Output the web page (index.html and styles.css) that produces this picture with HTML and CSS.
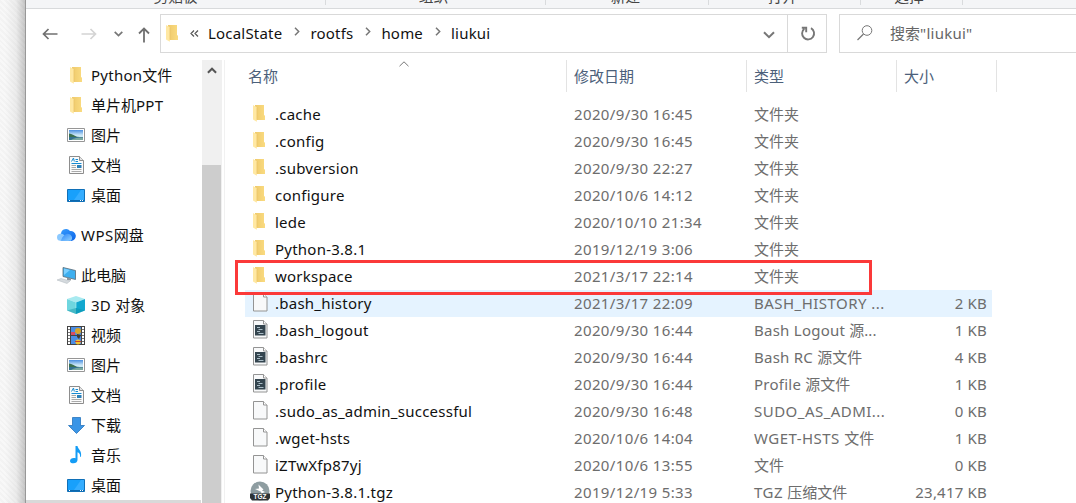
FILE: index.html
```
<!DOCTYPE html>
<html lang="zh-CN">
<head>
<meta charset="utf-8">
<title>liukui</title>
<link rel="stylesheet" href="styles.css">
</head>
<body>
<svg class="defs" aria-hidden="true">
  <defs>
    <linearGradient id="gf" x1="0" x2="1"><stop offset="0" stop-color="#efca6c"/><stop offset="1" stop-color="#fadb80"/></linearGradient>
    <linearGradient id="gsky" x1="0" y1="0" x2="0" y2="1"><stop offset="0" stop-color="#4a8fe0"/><stop offset=".5" stop-color="#c9e6f7"/><stop offset="1" stop-color="#d5edf5"/></linearGradient>
    <linearGradient id="gw" x1="0" y1="0" x2="1" y2="1"><stop offset="0" stop-color="#3aa0ff"/><stop offset="1" stop-color="#0a62e8"/></linearGradient>
    <linearGradient id="gw2" x1="0" y1="0" x2="1" y2="1"><stop offset="0" stop-color="#2b86f8"/><stop offset="1" stop-color="#8fd0ff"/></linearGradient>
    <symbol id="folder" viewBox="0 0 12 17"><path d="M2 0h9v10.200l1 .4V15H2z" fill="url(#gf)"/><path d="M0 0l3.900 2.200V16.800L0 14.600z" fill="#ffe8a3"/><path d="M3.900 2.400v12.300" stroke="#e6bf62" stroke-width=".5"/></symbol>
    <symbol id="picture" viewBox="0 0 18 14"><path d="M.5.5h17v13H.5z" fill="#fff" stroke="#969696"/><path d="M2 2h14v10H2z" fill="url(#gsky)"/><path d="M2 5.500c3 .3 5 2 8 3.200L13 9H2z" fill="#3c704f"/><path d="M2 9h14v3H2z" fill="#33718f"/><path d="M4 12c3-2 7-2.500 12-2.500V12z" fill="#79a8a0"/></symbol>
    <symbol id="doc" viewBox="0 0 15 18"><path d="M.5.5h10l4 4v13H.500z" fill="#fbfbfb" stroke="#8d8d8d"/><path d="M10.500.500v4h4" fill="#e4e4e4" stroke="#8d8d8d"/><path d="M2.500 5.500l2-3.500.8 3.500M6.500 3.500H9M6.500 5.500H9M2.500 7.500h10" fill="none" stroke="#168bd2"/><path d="M2.500 9.500H7M2.500 11.500H7M2.500 13.500h10M2.500 15.500h10" stroke="#aaa"/><path d="M8 9h4.500v3H8z" fill="#2b7fb8"/></symbol>
    <symbol id="desktop" viewBox="0 0 18 13"><path d="M.5.5h17v12H.5z" fill="#18a0fb" stroke="#1070b8"/><path d="M7 11L14 1h3v10z" fill="#35adff"/><path d="M1 11.500h16" stroke="#0d68ad"/><path d="M2 11.500h1M13 11.500h1M15 11.500h1" stroke="#fff"/></symbol>
    <symbol id="cloud" viewBox="0 0 19 14"><path d="M5 13a4 4 0 0 1-1-7.500A5 5 0 0 1 13 3a5 5 0 0 1 1.500 10z" fill="url(#gw)"/><path d="M3.500 12.700a3.500 3.500 0 0 1 0-7c3-.2 5 1.800 8.500 7z" fill="#8bc9ff"/><path d="M4 12.700c2-6 6-8 9-6.200 2 1.200 3 4 1 6.200z" fill="url(#gw2)"/></symbol>
    <symbol id="pc" viewBox="0 0 19 17"><path d="M6 .5l12.500 3v9L6 9.500z" fill="#3eafef" stroke="#5b6a75" stroke-width=".8"/><path d="M7 1.500l6 1.500-6 5z" fill="#7bcfff"/><path d="M10 10.500l4 1v2l-4-.5z" fill="#8a949c"/><path d="M0 13l4-1.500 9 2.500-3 2.500z" fill="#d5dade" stroke="#aeb6bc" stroke-width=".5"/></symbol>
    <symbol id="cube" viewBox="0 0 18 18"><path d="M9 0l9 3-9 3.500L0 3z" fill="#a8eaf0"/><path d="M0 3l9 3.500V18l-9-3.500z" fill="#6fd6df"/><path d="M18 3L9 6.500V18l9-3.500z" fill="#12a8cf"/><path d="M9 12l9 2.500L9 18l-9-3.500z" fill="#078ba0" opacity=".4"/><path d="M9 6.500V12" stroke="#b4f1f5" stroke-width=".6"/></symbol>
    <symbol id="film" viewBox="0 0 18 19"><path d="M0 0h18v19H0z" fill="#444"/><path d="M4 1h10v8H4zM4 10h10v8H4z" fill="#4b8de4"/><path d="M1 1h2v17H1zM15 1h2v17h-2z" fill="#777"/><path d="M2 1v17M16 1v17" stroke="#fff" stroke-width="2" stroke-dasharray="2 1"/><circle cx="11" cy="5" r="3" fill="#d8a52c"/><path d="M4 6h4v3H4z" fill="#da4c62"/><path d="M10 8l4 1-2 4-2-2z" fill="#473b2b"/><circle cx="11" cy="16" r="2.500" fill="#f1c431"/><path d="M8 15h6v1H8z" fill="#c8432c"/></symbol>
    <symbol id="down" viewBox="0 0 17 17"><path d="M4.500.500h8v8h4l-8 8-8-8h4z" fill="#3a95e6" stroke="#2775bd" stroke-width=".8"/></symbol>
    <symbol id="music" viewBox="0 0 12 18"><path d="M5.500 0h2c.3 3 4.200 4.500 3.600 9.500-.2 1-.7 1.500-1.100 1.500.6-3-1-4.200-2.500-4.700V14c0 2-1.800 3.300-4 3.300S0 16.500 0 15c0-2 2.500-3.500 5.500-2.700z" fill="#149cf5"/></symbol>
    <symbol id="file" viewBox="0 0 15 19"><path d="M.5.5h10l3.500 3.500v14H.5z" fill="#f8f9fa" stroke="#949494"/><path d="M10.500.500V4H14" fill="#fff" stroke="#949494"/></symbol>
    <symbol id="script" viewBox="0 0 15 19"><path d="M.5.5h10l3.500 3.500v14H.5z" fill="#f8f9fa" stroke="#949494"/><path d="M10.500.500V4H14" fill="#fff" stroke="#949494"/><path d="M2 5h10.500v10.500H2z" fill="#34454f"/><path d="M4 7.500h3M5.500 9.500h4M4 11.500h3M5.500 13.500h5" stroke="#a9bcc6"/></symbol>
    <symbol id="tgz" viewBox="0 0 20 20"><circle cx="10" cy="10" r="9.500" fill="#8e9da1"/><path d="M8.500 3.500l5 5-1.500 1 3 1.500-4.500 2L11.500 11 5 8l4-.5z" fill="#fff"/><path d="M0 12.500h20V17l-2 2.500H2L0 17z" fill="#2d3336"/><text x="10" y="18.300" text-anchor="middle" class="tgz-label">TGZ</text></symbol>
    <symbol id="crumb" viewBox="0 0 6 9"><path d="M1 .7l3.700 3.800L1 8.300" fill="none" stroke="#777" stroke-width="1.500"/></symbol>
  </defs>
</svg>

<div class="screen">
  <div class="backdrop"></div>
  <main class="window">
    <div class="ribbon">
      <div class="group clip">剪贴板</div><div class="group org">组织</div><div class="group new">新建</div><div class="group open">打开</div><div class="group sel">选择</div>
    </div>
    <nav class="navbar">
      <svg class="arrow-left" viewBox="0 0 16 12"><path d="M15.500 6H1.500M6.500 1L1.500 6l5 5" fill="none" stroke="#707070" stroke-width="1.700"/></svg>
      <svg class="arrow-right" viewBox="0 0 16 12"><path d="M.500 6h14M9.500 1l5 5-5 5" fill="none" stroke="#d4d4d4" stroke-width="1.700"/></svg>
      <svg class="recent" viewBox="0 0 9 6"><path d="M.7.8l3.800 3.800L8.300.8" fill="none" stroke="#777" stroke-width="1.700"/></svg>
      <svg class="arrow-up" viewBox="0 0 12 16"><path d="M6 15.500V1.500M1 6.500l5-5 5 5" fill="none" stroke="#707070" stroke-width="1.800"/></svg>
      <div class="address">
        <svg class="folder"><use href="#folder"/></svg>
        <svg class="more" viewBox="0 0 9 7"><path d="M4 .5L1 3.500l3 3M8 .5L5 3.500l3 3" fill="none" stroke="#555" stroke-width="1.200"/></svg>
        <span class="crumbs"><span>LocalState</span><svg><use href="#crumb"/></svg><span>rootfs</span><svg><use href="#crumb"/></svg><span>home</span><svg><use href="#crumb"/></svg><span>liukui</span></span>
        <svg class="drop" viewBox="0 0 12 8"><path d="M1 1.200l5 5 5-5" fill="none" stroke="#777" stroke-width="2"/></svg>
      </div>
      <div class="refresh"><svg viewBox="0 0 16 16"><path d="M11 2.200A6 6 0 1 1 4.300 2.800M1.800 1.800h4.400v4.400" fill="none" stroke="#777" stroke-width="1.900"/></svg></div>
      <div class="search"><svg viewBox="0 0 16 16"><circle cx="10" cy="5.500" r="4.800" fill="none" stroke="#777"/><path d="M6.500 9L.5 15" stroke="#777" stroke-width="1.200"/></svg><span>搜索<i>"liukui"</i></span></div>
    </nav>
    <div class="body">
      <aside class="tree">
        <div class="node"><b><svg class="folder"><use href="#folder"/></svg></b><i>Python</i>文件</div>
        <div class="node"><b><svg class="folder"><use href="#folder"/></svg></b>单片机<i>PPT</i></div>
        <div class="node"><b><svg class="picture"><use href="#picture"/></svg></b>图片</div>
        <div class="node"><b><svg class="doc"><use href="#doc"/></svg></b>文档</div>
        <div class="node"><b><svg class="desktop"><use href="#desktop"/></svg></b>桌面</div>
        <div class="node root"><b><svg class="cloud"><use href="#cloud"/></svg></b><i class="caps">WPS</i>网盘</div>
        <div class="node root"><b><svg class="pc"><use href="#pc"/></svg></b>此电脑</div>
        <div class="node"><b><svg class="cube"><use href="#cube"/></svg></b><i>3D </i>对象</div>
        <div class="node"><b><svg class="film"><use href="#film"/></svg></b>视频</div>
        <div class="node"><b><svg class="picture"><use href="#picture"/></svg></b>图片</div>
        <div class="node"><b><svg class="doc"><use href="#doc"/></svg></b>文档</div>
        <div class="node"><b><svg class="down"><use href="#down"/></svg></b>下载</div>
        <div class="node"><b><svg class="music"><use href="#music"/></svg></b>音乐</div>
        <div class="node"><b><svg class="desktop"><use href="#desktop"/></svg></b>桌面</div>
        <div class="tree-end"></div>
      </aside>
      <div class="scrollbar"><svg viewBox="0 0 10 7"><path d="M.9 5.800L5 1.700l4.100 4.100" fill="none" stroke="#555" stroke-width="2"/></svg><div class="thumb"></div></div>
      <section class="files">
        <header class="columns"><span>名称<svg class="sort" viewBox="0 0 10 6"><path d="M.5 5.200L5 .8l4.500 4.400" fill="none" stroke="#777"/></svg></span><span>修改日期</span><span>类型</span><span>大小</span></header>
        <div class="rows">
          <div class="row"><svg class="folder"><use href="#folder"/></svg><span class="name">.cache</span><span class="date">2020/9/30 16:45</span><span class="type">文件夹</span><span class="size"></span></div>
          <div class="row"><svg class="folder"><use href="#folder"/></svg><span class="name">.config</span><span class="date">2020/9/30 16:45</span><span class="type">文件夹</span><span class="size"></span></div>
          <div class="row"><svg class="folder"><use href="#folder"/></svg><span class="name">.subversion</span><span class="date">2020/9/30 22:27</span><span class="type">文件夹</span><span class="size"></span></div>
          <div class="row"><svg class="folder"><use href="#folder"/></svg><span class="name">configure</span><span class="date">2020/10/6 14:12</span><span class="type">文件夹</span><span class="size"></span></div>
          <div class="row"><svg class="folder"><use href="#folder"/></svg><span class="name">lede</span><span class="date">2020/10/10 21:34</span><span class="type">文件夹</span><span class="size"></span></div>
          <div class="row"><svg class="folder"><use href="#folder"/></svg><span class="name">Python-3.8.1</span><span class="date">2019/12/19 3:06</span><span class="type">文件夹</span><span class="size"></span></div>
          <div class="row marked"><svg class="folder"><use href="#folder"/></svg><span class="name">workspace</span><span class="date">2021/3/17 22:14</span><span class="type">文件夹</span><span class="size"></span></div>
          <div class="row hover"><svg class="file"><use href="#file"/></svg><span class="name">.bash_history</span><span class="date">2021/3/17 22:09</span><span class="type"><i class="caps">BASH_HISTORY ...</i></span><span class="size">2 KB</span></div>
          <div class="row"><svg class="file"><use href="#script"/></svg><span class="name">.bash_logout</span><span class="date">2020/9/30 16:44</span><span class="type"><i>Bash Logout </i>源...</span><span class="size">1 KB</span></div>
          <div class="row"><svg class="file"><use href="#script"/></svg><span class="name">.bashrc</span><span class="date">2020/9/30 16:44</span><span class="type"><i>Bash RC </i>源文件</span><span class="size">4 KB</span></div>
          <div class="row"><svg class="file"><use href="#script"/></svg><span class="name">.profile</span><span class="date">2020/9/30 16:44</span><span class="type"><i>Profile </i>源文件</span><span class="size">1 KB</span></div>
          <div class="row"><svg class="file"><use href="#file"/></svg><span class="name">.sudo_as_admin_successful</span><span class="date">2020/9/30 16:48</span><span class="type"><i class="caps">SUDO_AS_ADMI...</i></span><span class="size">0 KB</span></div>
          <div class="row"><svg class="file"><use href="#file"/></svg><span class="name">.wget-hsts</span><span class="date">2020/10/6 14:04</span><span class="type"><i class="caps">WGET-HSTS </i>文件</span><span class="size">1 KB</span></div>
          <div class="row"><svg class="file"><use href="#file"/></svg><span class="name">iZTwXfp87yj</span><span class="date">2020/10/6 13:55</span><span class="type">文件</span><span class="size">0 KB</span></div>
          <div class="row"><svg class="tgz"><use href="#tgz"/></svg><span class="name">Python-3.8.1.tgz</span><span class="date">2019/12/19 5:33</span><span class="type"><i class="caps">TGZ </i>压缩文件</span><span class="size">23,417 KB</span></div>
        </div>
      </section>
    </div>
  </main>
</div>
</body>
</html>
```

FILE: styles.css
```
* { box-sizing: border-box; }
body {
  margin: 0;
  overflow: hidden;
  font: 15px/20px "Noto Sans", "Noto Sans CJK SC", sans-serif;
  color: #111;
  background: #fff;
}
svg { display: block; flex: none; }
i { font-style: normal; white-space: pre; letter-spacing: .25px; }
.caps { letter-spacing: .47px; }
.defs { position: absolute; width: 0; height: 0; }
.screen { display: flex; width: 1076px; height: 503px; overflow: hidden; }
.backdrop {
  width: 25px;
  flex: none;
  background:
    linear-gradient(90deg, rgba(0,0,0,0) 20%, rgba(0,0,0,.05) 65%, rgba(0,0,0,.2)),
    repeating-linear-gradient(45deg, #f8f8f8 0 2px, #f3f3f3 2px 4px);
}
.window { flex: 1; min-width: 0; border-left: 1px solid #989898; background: #fff; }

.ribbon { display: flex; height: 9px; overflow: hidden; background: #f4f5f7; border-bottom: 1px solid #d8dadc; color: #444; }
.group { flex: none; height: 5px; font-size: 14.700px; line-height: 18px; display: flex; align-items: flex-end; justify-content: center; border-right: 1px solid #d9dbdd; padding-right: 4px; }
.clip { width: 300px; padding-right: 0; }
.org { width: 220px; }
.new { width: 163px; padding-right: 3px; }
.open { width: 152px; }
.sel { width: 102px; padding-right: 5px; }

.navbar { display: flex; height: 51px; padding-top: 5px; }
.arrow-left { width: 16px; height: 12px; margin: 14px 0 0 16px; }
.arrow-right { width: 16px; height: 12px; margin: 14px 0 0 23px; }
.recent { width: 9px; height: 6px; margin: 17px 0 0 17px; }
.arrow-up { width: 12px; height: 16px; margin: 13px 10px 0 15px; }
.address { display: flex; flex: none; width: 628px; height: 39px; border: 1px solid #d9d9d9; }
.address .folder { margin: 10px 0 0 5px; }
.more { width: 9px; height: 7px; margin: 15px 0 0 12px; }
.crumbs { display: flex; align-items: center; height: 35px; margin-left: 9px; flex: 1; letter-spacing: .2px; }
.crumbs svg { width: 6px; height: 9px; margin: 0 10px 2px 12px; }
.drop { width: 12px; height: 8px; margin: 16px 12px 0 0; }
.refresh { width: 40px; flex: none; height: 39px; border: 1px solid #d9d9d9; margin-left: -1px; }
.refresh svg { width: 16px; height: 16px; margin: 11px 0 0 12px; }
.search { display: flex; align-items: center; width: 260px; height: 39px; border: 1px solid #d9d9d9; margin-left: 12px; padding-bottom: 2px; flex: none; color: #666; }
.search svg { width: 16px; height: 16px; margin: 1px 17px 0 17px; }

.body { display: flex; height: 443px; }
.tree { width: 176px; flex: none; }
.node { display: flex; align-items: center; height: 30px; padding-left: 37px; white-space: nowrap; }
.node b { display: flex; align-items: center; justify-content: center; width: 26px; margin-right: 2px; }
.node.root { height: 40px; padding: 10px 0 0 27px; }
.tree-end { height: 3px; width: 175px; background: #d9d9d9; }
.folder { width: 12px; height: 17px; }
.picture { width: 18px; height: 14px; }
.doc { width: 15px; height: 18px; }
.desktop { width: 18px; height: 13px; }
.cloud { width: 19px; height: 14px; }
.pc { width: 19px; height: 17px; }
.cube { width: 18px; height: 18px; }
.film { width: 18px; height: 19px; }
.down { width: 17px; height: 17px; }
.music { width: 12px; height: 18px; }

.scrollbar { width: 20px; flex: none; background: #f0f0f0; }
.scrollbar svg { width: 10px; height: 7px; margin: 7px 0 0 5px; }
.thumb { width: 19px; height: 338px; margin-top: 91px; background: #cdcdcd; }
.files { flex: 1; margin-left: 2px; border-left: 1px solid #f1f1f1; min-width: 0; }
.columns { display: flex; height: 32px; color: #4c607a; }
.columns span { width: 150px; padding-left: 7px; border-right: 1px solid #e3e3e3; line-height: 33px; }
.columns span:first-child { display: flex; width: 342px; padding-left: 23px; }
.columns span:nth-child(2) { width: 180px; }
.columns span:nth-child(4) { width: 100px; }
.sort { width: 10px; height: 6px; margin: 1px 0 0 121px; }
.rows { padding-top: 9px; }
.row { position: relative; display: flex; align-items: center; height: 27px; width: 747px; margin-left: 20px; padding: 0 0 2px 8px; color: #6d6d6d; white-space: nowrap; }
.row .folder { margin: 0 10px 0 0; }
.file { width: 15px; height: 19px; margin: -1px 7px 0 0; }
.tgz { width: 20px; height: 20px; margin: -1px 5px 0 -3px; }
.tgz-label { font: bold 6.500px "Liberation Sans", sans-serif; fill: #fff; }
.name { width: 299px; color: #111; letter-spacing: .24px; }
.date { width: 180px; letter-spacing: .37px; }
.type { width: 147px; }
.size { flex: 1; text-align: right; padding-right: 5px; letter-spacing: .2px; }
.hover { background: #e5f3ff; }
.marked::after { content: ""; position: absolute; left: -10px; top: -3px; width: 631px; height: 29px; border: 3px solid #fb3939; z-index: 1; }
```
